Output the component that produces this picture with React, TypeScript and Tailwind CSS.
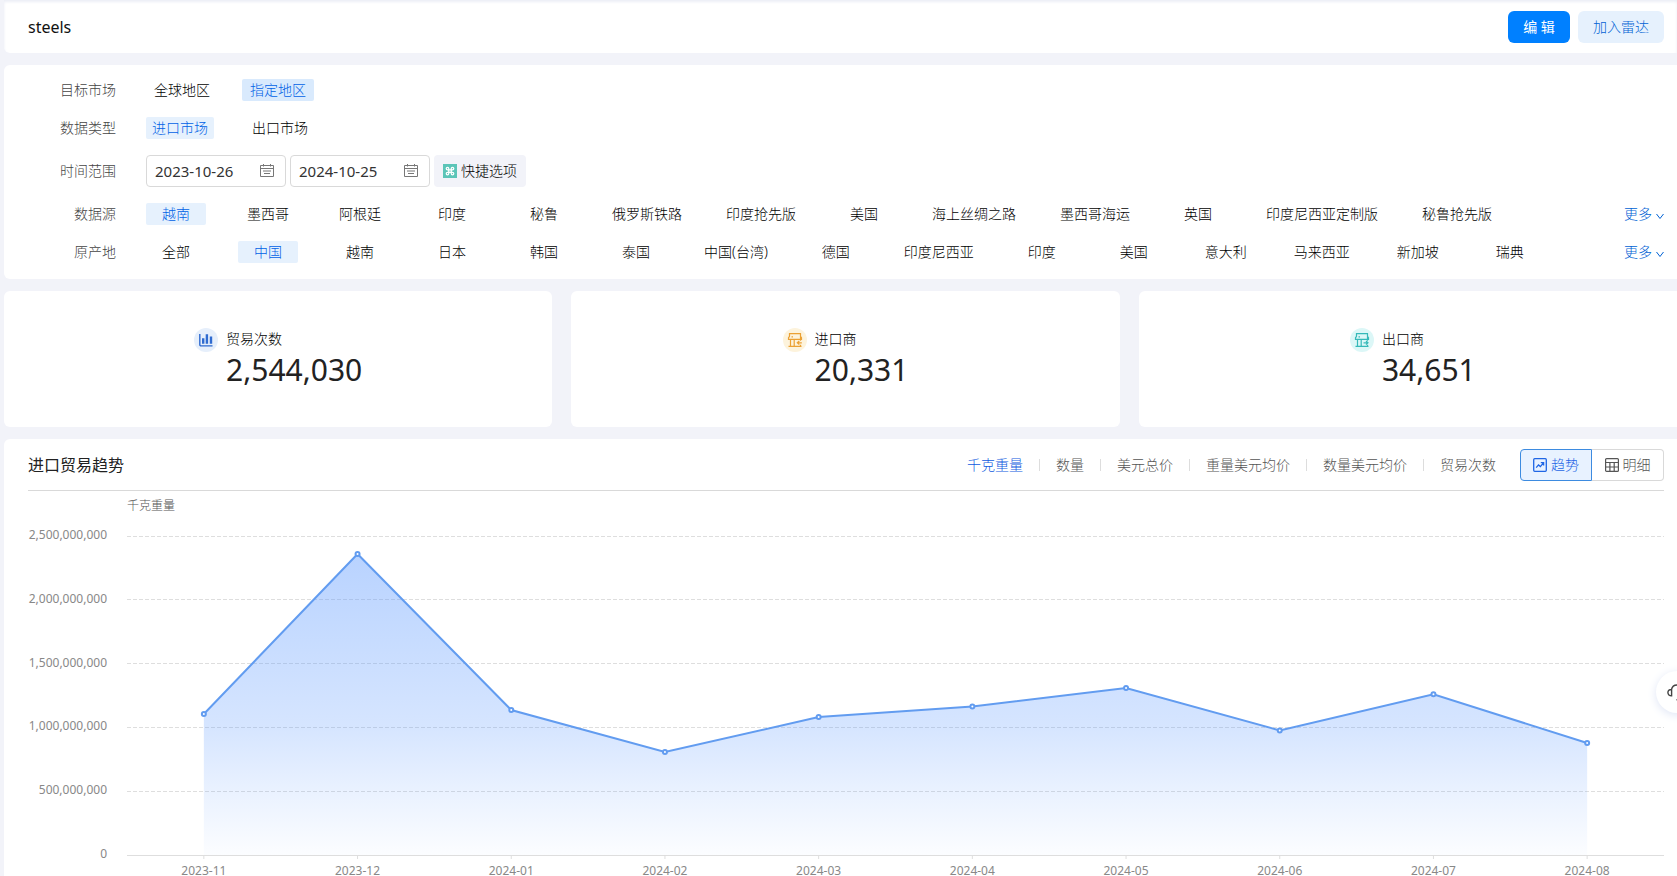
import React, { useState } from 'react';
import clsx from 'clsx';
import { Command } from 'lucide-react';

const sources = ['越南', '墨西哥', '阿根廷', '印度', '秘鲁', '俄罗斯铁路', '印度抢先版', '美国', '海上丝绸之路', '墨西哥海运', '英国', '印度尼西亚定制版', '秘鲁抢先版'];
const origins = ['全部', '中国', '越南', '日本', '韩国', '泰国', '中国(台湾)', '德国', '印度尼西亚', '印度', '美国', '意大利', '马来西亚', '新加坡', '瑞典'];
const metrics = ['千克重量', '数量', '美元总价', '重量美元均价', '数量美元均价', '贸易次数'];

const trend = [
  { month: '2023-11', value: 1105000000 },
  { month: '2023-12', value: 2359000000 },
  { month: '2024-01', value: 1136000000 },
  { month: '2024-02', value: 807000000 },
  { month: '2024-03', value: 1081000000 },
  { month: '2024-04', value: 1164000000 },
  { month: '2024-05', value: 1309000000 },
  { month: '2024-06', value: 976000000 },
  { month: '2024-07', value: 1259000000 },
  { month: '2024-08', value: 878000000 },
];
const ticks = [2500000000, 2000000000, 1500000000, 1000000000, 500000000, 0];
const MAX = ticks[0];

const CalendarIcon = () => (
  <svg width="14" height="14" viewBox="0 0 14 14" fill="none" stroke="#777" className="shrink-0">
    <path d="M.5 1.5h13v11H.5zM.5 4.5h13M3.5 0v2.5M10.5 0v2.5M3 7h8M4 9.5h6" />
  </svg>
);

const BarsIcon = () => (
  <svg width="24" height="24" viewBox="0 0 24 24" fill="none">
    <circle cx="12" cy="12" r="12" fill="#e6effb" />
    <path d="M5.8 6v10.7a1.2 1.2 0 0 0 1.2 1.2h11.5" stroke="#2f6bd0" strokeWidth="1.4" />
    <path d="M9.2 10.3v5.4M12.9 6.2v9.5M17 8.6v7.1" stroke="#2f6bd0" strokeWidth="2.4" />
  </svg>
);

const ShopIcon = ({ color, bg, out }: { color: string, bg: string, out?: boolean }) => (
  <svg width="24" height="24" viewBox="0 0 24 24" fill="none" stroke={color} strokeWidth="1.2">
    <circle cx="12" cy="12" r="12" fill={bg} stroke="none" />
    <path d="M6.5 5.6h11v5.7h-12V9.8l1-1.5zM17.5 8.3l1 1.5v1.5h-1M7.5 11.3v7M5.5 18.3h13M11.2 11.3v7M17.5 11.3v1.5M17.5 16.8v1.5M8.5 8.8H10" />
    {out
      ? <path d="M13.5 14.8H18M16 13l2 1.8-2 1.8" />
      : <path d="M18.8 14.8h-4.5M16.3 13l-2 1.8 2 1.8" />}
  </svg>
);

const TrendIcon = () => (
  <svg width="14" height="14" viewBox="0 0 14 14" fill="none" stroke="currentColor" strokeWidth="1.3">
    <rect x=".7" y=".7" width="12.6" height="12.6" rx="1" />
    <path d="M3.2 9.6l2.3-2.7 1.9 1.7 3-3.7M7.8 4.7h2.8v2.7" />
  </svg>
);

const TableIcon = () => (
  <svg width="14" height="14" viewBox="0 0 14 14" fill="none" stroke="currentColor" strokeWidth="1.2">
    <rect x=".6" y=".6" width="12.8" height="12.8" rx="1" />
    <path d="M.6 4.5h12.8M.6 9h12.8M4.9 4.5v9M9.2 4.5v9" />
  </svg>
);

const FilterRow = ({ label, children }: { label: string, children: React.ReactNode }) => (
  <div className="flex items-center">
    <div className="w-28 shrink-0 mr-[30px] text-right text-[#444]">{label}</div>
    {children}
  </div>
);

const More = () => (
  <button className="ml-auto mr-[13px] shrink-0 flex items-center gap-1 text-[#0062d4]">
    更多
    <svg width="8" height="8" viewBox="0 0 8 8" fill="none" stroke="currentColor" className="mt-1">
      <path d="M.5 2L4 6.5 7.5 2" />
    </svg>
  </button>
);

const Options = ({ items, initial }: { items: string[], initial: string }) => {
  const [picked, setPicked] = useState(initial);
  return (
    <div className="flex gap-8 whitespace-nowrap">
      {items.map(item => (
        <button
          key={item}
          onClick={() => setPicked(item)}
          className={clsx('h-[22px] min-w-15 px-1.5 rounded-xs', picked === item ? 'bg-[#e6f1fd] text-[#0062e6]' : 'text-black')}
        >
          {item}
        </button>
      ))}
    </div>
  );
};

const DateBox = ({ label, value }: { label: string, value: string }) => (
  <label className="flex items-center w-35 h-8 mr-1 pl-2 pr-[11px] border border-[#d9d9d9] rounded-sm">
    <input aria-label={label} defaultValue={value} className="flex-1 min-w-0 text-[15px] font-normal text-[#333] outline-none" />
    <CalendarIcon />
  </label>
);

const Stat = ({ icon, label, value }: { icon: React.ReactNode, label: string, value: string }) => (
  <div className="flex items-center justify-center h-34 bg-white rounded-md">
    <div className="flex gap-2">
      {icon}
      <div>
        <div className="leading-[22px]">{label}</div>
        <div className="text-[30px] leading-10 font-normal text-[#222]">{value}</div>
      </div>
    </div>
  </div>
);

const TrendChart = () => {
  const xs = trend.map((_, i) => (i + 0.5) * (100 / trend.length));
  const ys = trend.map(d => 100 - (d.value / MAX) * 100);
  const line = xs.map((x, i) => `${x},${ys[i]}`).join(' ');

  return (
    <div className="text-xs leading-4 font-normal text-[#888]">
      <div className="pt-[7px] pl-[99px] font-light text-[#555]">千克重量</div>
      <div className="flex gap-5 pt-[13px]">
        <div className="w-[79px] h-[335px] shrink-0 flex flex-col justify-between text-right">
          {ticks.map(t => <span key={t}>{t.toLocaleString('en-US')}</span>)}
        </div>
        <div className="flex-1 min-w-0 pt-[9px]">
          <svg className="block w-full h-[319px] overflow-visible">
            <defs>
              <linearGradient id="area" x1="0" y1="0" x2="0" y2="1">
                <stop offset="0" stopColor="#5b98ff" stopOpacity="0.43" />
                <stop offset="0.58" stopColor="#5b98ff" stopOpacity="0.25" />
                <stop offset="0.79" stopColor="#5b98ff" stopOpacity="0.13" />
                <stop offset="1" stopColor="#5b98ff" stopOpacity="0.02" />
              </linearGradient>
            </defs>
            {ticks.map((t, i) => (
              <line
                key={t} x1="0" x2="100%" y1={`${i * 20}%`} y2={`${i * 20}%`}
                stroke="#dedede" strokeDasharray={t ? '4 2' : undefined} shapeRendering="crispEdges"
              />
            ))}
            {xs.map(x => (
              <svg key={x} x={`${x}%`} y="100%" overflow="visible"><path d="M0 0v4" stroke="#dedede" /></svg>
            ))}
            <svg width="100%" height="100%" viewBox="0 0 100 100" preserveAspectRatio="none">
              <polygon points={`${xs[0]},100 ${line} ${xs[xs.length - 1]},100`} fill="url(#area)" />
              <polyline points={line} fill="none" stroke="#629cf0" strokeWidth="2" vectorEffect="non-scaling-stroke" />
            </svg>
            {xs.map((x, i) => (
              <circle key={x} cx={`${x}%`} cy={`${ys[i]}%`} r="2" fill="#fff" stroke="#629cf0" strokeWidth="2" />
            ))}
          </svg>
          <div className="grid grid-cols-10 pt-2.5 text-center leading-3">
            {trend.map(d => <span key={d.month}>{d.month}</span>)}
          </div>
        </div>
      </div>
    </div>
  );
};

export default function App() {
  const [region, setRegion] = useState('指定地区');
  const [market, setMarket] = useState('进口市场');
  const [metric, setMetric] = useState('千克重量');

  return (
    <div className="h-screen overflow-hidden bg-[#f2f3f9] pl-1 flex flex-col gap-3 text-sm font-light text-black font-['Noto_Sans','Noto_Sans_CJK_SC',sans-serif]">
      <header className="flex items-center shrink-0 h-[53px] pl-6 pr-[13px] bg-white rounded-bl-md shadow-[inset_0_2px_3px_#eceef6]">
        <h1 className="text-base font-normal text-[#111]">steels</h1>
        <button className="ml-auto w-[62px] h-8 rounded-md bg-[#0080ff] text-white font-normal">编 辑</button>
        <button className="ml-2 w-[86px] h-8 rounded-md bg-[#e6f1fd] text-[#0062d4]">加入雷达</button>
      </header>

      <section className="shrink-0 flex flex-col gap-4 pt-3.5 pb-4 bg-white rounded-l-md leading-[22px]">
        <FilterRow label="目标市场">
          <div className="flex gap-6">
            {['全球地区', '指定地区'].map(r => (
              <button
                key={r}
                onClick={() => setRegion(r)}
                className={clsx('h-[22px] px-2 rounded-xs', region === r ? 'bg-[#d9eafd] text-[#0062e6]' : 'text-black')}
              >
                {r}
              </button>
            ))}
          </div>
        </FilterRow>
        <FilterRow label="数据类型">
          <div className="flex gap-8">
            {['进口市场', '出口市场'].map(m => (
              <button
                key={m}
                onClick={() => setMarket(m)}
                className={clsx('h-[22px] px-1.5 rounded-xs', market === m ? 'bg-[#e6f1fd] text-[#0062e6]' : 'text-black')}
              >
                {m}
              </button>
            ))}
          </div>
        </FilterRow>
        <FilterRow label="时间范围">
          <DateBox label="开始日期" value="2023-10-26" />
          <DateBox label="结束日期" value="2024-10-25" />
          <button className="flex items-center justify-center gap-1 w-23 h-8 rounded-sm bg-[#f2f3f9]">
            <span className="flex items-center justify-center size-3.5 bg-[#5cc5b8] text-white"><Command size={10} strokeWidth={3} /></span>
            快捷选项
          </button>
        </FilterRow>
        <FilterRow label="数据源">
          <Options items={sources} initial="越南" />
          <More />
        </FilterRow>
        <FilterRow label="原产地">
          <Options items={origins} initial="中国" />
          <More />
        </FilterRow>
      </section>

      {/* third card runs past the right edge */}
      <section className="shrink-0 grid grid-cols-3 gap-[19px] -mr-2.5">
        <Stat icon={<BarsIcon />} label="贸易次数" value="2,544,030" />
        <Stat icon={<ShopIcon color="#eba134" bg="#fdf3dc" />} label="进口商" value="20,331" />
        <Stat icon={<ShopIcon color="#35b9b9" bg="#dcf7f7" out />} label="出口商" value="34,651" />
      </section>

      <section className="flex-1 pl-6 pr-[13px] bg-white rounded-tl-md">
        <div className="flex items-center pt-2.5 pb-[9px] border-b border-[#d9d9d9]">
          <h2 className="text-base font-normal text-[#222]">进口贸易趋势</h2>
          <div className="ml-auto flex items-center">
            {metrics.map((m, i) => (
              <React.Fragment key={m}>
                {i > 0 && <span className="w-px h-3 mx-4 bg-[#ddd]" />}
                <button onClick={() => setMetric(m)} className={metric === m ? 'text-[#0f5be0]' : 'text-[#555]'}>{m}</button>
              </React.Fragment>
            ))}
          </div>
          <div className="ml-6 flex">
            <button className="flex items-center justify-center gap-1 w-18 h-8 border border-[#3d8be0] rounded-l-sm bg-[#e8f2ff] text-[#1f66e5]">
              <TrendIcon />趋势
            </button>
            <button className="flex items-center justify-center gap-1 w-18 h-8 border border-l-0 border-[#d9d9d9] rounded-r-sm text-[#555]">
              <TableIcon />明细
            </button>
          </div>
        </div>
        <TrendChart />
      </section>

      <button aria-label="客服" className="fixed top-[671px] -right-[21px] size-[42px] flex items-center justify-center rounded-full bg-white shadow-[0_2px_10px_#dfe5f5]">
        <svg width="20" height="20" viewBox="0 0 20 20" fill="none" stroke="#444" strokeWidth="1.4">
          <path d="M4.5 7.5a5.6 5.6 0 0 1 11 0M4.6 7.5v6.3C2.300 13.800.9 12.500.9 10.600s1.400-3.100 3.700-3.100zM15.400 7.500v6.300c2.300 0 3.700-1.300 3.700-3.200s-1.400-3.100-3.700-3.100zM15.400 13.800c0 2.400-1.500 4-3.400 4H9.500" />
        </svg>
      </button>
    </div>
  );
}
